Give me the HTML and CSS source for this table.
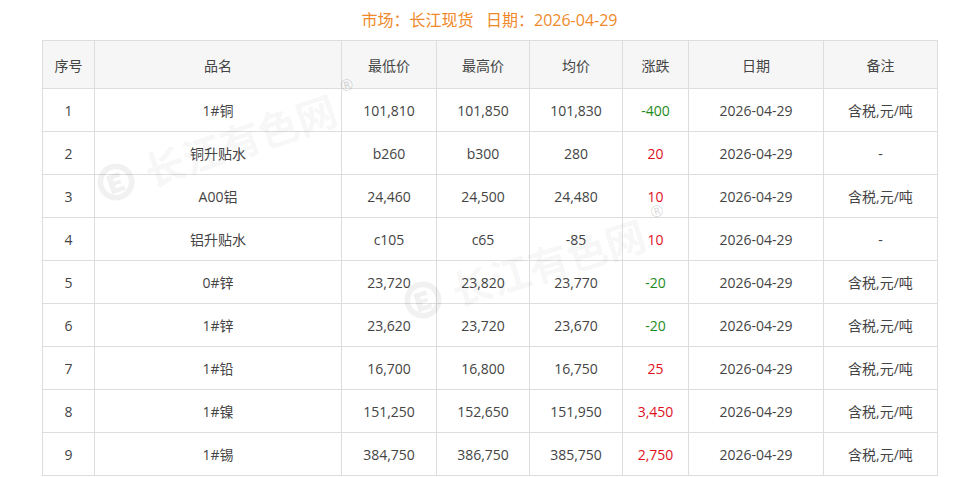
FILE: index.html
```html
<!DOCTYPE html>
<html lang="zh-CN">
<head>
<meta charset="utf-8">
<title>长江现货</title>
<link rel="stylesheet" href="styles.css">
</head>
<body>
<div class="page">
  <h1 class="title">市场：长江现货&nbsp;&nbsp;&nbsp;日期：2026-04-29</h1>
  <div class="table-wrap">
    <table class="price">
      <colgroup>
        <col class="c1"><col class="c2"><col class="c3"><col class="c4"><col class="c5"><col class="c6"><col class="c7"><col class="c8">
      </colgroup>
      <thead>
        <tr><th>序号</th><th>品名</th><th>最低价</th><th>最高价</th><th>均价</th><th>涨跌</th><th>日期</th><th>备注</th></tr>
      </thead>
      <tbody>
        <tr><td>1</td><td>1#铜</td><td>101,810</td><td>101,850</td><td>101,830</td><td class="down">-400</td><td>2026-04-29</td><td>含税,元/吨</td></tr>
        <tr><td>2</td><td>铜升贴水</td><td>b260</td><td>b300</td><td>280</td><td class="up">20</td><td>2026-04-29</td><td>-</td></tr>
        <tr><td>3</td><td>A00铝</td><td>24,460</td><td>24,500</td><td>24,480</td><td class="up">10</td><td>2026-04-29</td><td>含税,元/吨</td></tr>
        <tr><td>4</td><td>铝升贴水</td><td>c105</td><td>c65</td><td>-85</td><td class="up">10</td><td>2026-04-29</td><td>-</td></tr>
        <tr><td>5</td><td>0#锌</td><td>23,720</td><td>23,820</td><td>23,770</td><td class="down">-20</td><td>2026-04-29</td><td>含税,元/吨</td></tr>
        <tr><td>6</td><td>1#锌</td><td>23,620</td><td>23,720</td><td>23,670</td><td class="down">-20</td><td>2026-04-29</td><td>含税,元/吨</td></tr>
        <tr><td>7</td><td>1#铅</td><td>16,700</td><td>16,800</td><td>16,750</td><td class="up">25</td><td>2026-04-29</td><td>含税,元/吨</td></tr>
        <tr><td>8</td><td>1#镍</td><td>151,250</td><td>152,650</td><td>151,950</td><td class="up">3,450</td><td>2026-04-29</td><td>含税,元/吨</td></tr>
        <tr><td>9</td><td>1#锡</td><td>384,750</td><td>386,750</td><td>385,750</td><td class="up">2,750</td><td>2026-04-29</td><td>含税,元/吨</td></tr>
      </tbody>
    </table>
    <div class="wm wm-a">
      <svg class="wm-logo" viewBox="0 0 40 40" width="38" height="38"><circle cx="20" cy="20" r="16.5" fill="none" stroke="currentColor" stroke-width="6"/><path d="M12 11h14v5h-8v3h7v4h-7v3h9v5H12z" fill="currentColor"/></svg>
      <span class="wm-text">长江有色网</span><span class="wm-r">®</span>
    </div>
    <div class="wm wm-b">
      <svg class="wm-logo" viewBox="0 0 40 40" width="38" height="38"><circle cx="20" cy="20" r="16.5" fill="none" stroke="currentColor" stroke-width="6"/><path d="M12 11h14v5h-8v3h7v4h-7v3h9v5H12z" fill="currentColor"/></svg>
      <span class="wm-text">长江有色网</span><span class="wm-r">®</span>
    </div>
  </div>
</div>
</body>
</html>
```
FILE: styles.css
```css
html, body {
  margin: 0;
  padding: 0;
  background: #fff;
}
body {
  font-family: "Open Sans", "Noto Sans CJK SC", sans-serif;
  color: #444;
  font-size: 14px;
}
.page {
  width: 895px;
  margin: 0 auto;
}
.title {
  margin: 0;
  height: 40px;
  line-height: 40px;
  font-size: 16px;
  font-weight: normal;
  color: #f0892a;
  text-align: center;
}
.table-wrap {
  position: relative;
}
.price {
  width: 895px;
  border-collapse: collapse;
  table-layout: fixed;
}
.c1 { width: 52px; }
.c2 { width: 247px; }
.c3 { width: 95px; }
.c4 { width: 93px; }
.c5 { width: 93px; }
.c6 { width: 66px; }
.c7 { width: 135px; }
.c8 { width: 114px; }
.price th, .price td {
  border: 1px solid #ddd;
  text-align: center;
  padding: 0;
  font-weight: normal;
}
.price th {
  height: 47px;
  background: #f6f6f6;
  color: #444;
}
.price td {
  height: 42px;
  color: #444;
}
.price td.up { color: #e0101e; }
.price td.down { color: #1d8a1d; }
.wm {
  position: absolute;
  display: flex;
  align-items: center;
  height: 52px;
  color: rgba(0, 0, 0, 0.055);
  transform-origin: 19px 50%;
  pointer-events: none;
}
.wm-logo {
  flex: none;
  margin-right: 12px;
}
.wm-a { left: 55px; top: 116px; transform: rotate(-19deg); }
.wm-b { left: 362px; top: 234px; transform: rotate(-17deg); }
.wm-text {
  font-size: 40px;
  font-weight: bold;
  font-family: "Noto Sans CJK SC", sans-serif;
  line-height: 52px;
  white-space: nowrap;
}
.wm-r {
  font-size: 16px;
  color: rgba(0, 0, 0, 0.16);
  align-self: flex-start;
  margin-top: -2px;
  margin-left: 12px;
}
```
